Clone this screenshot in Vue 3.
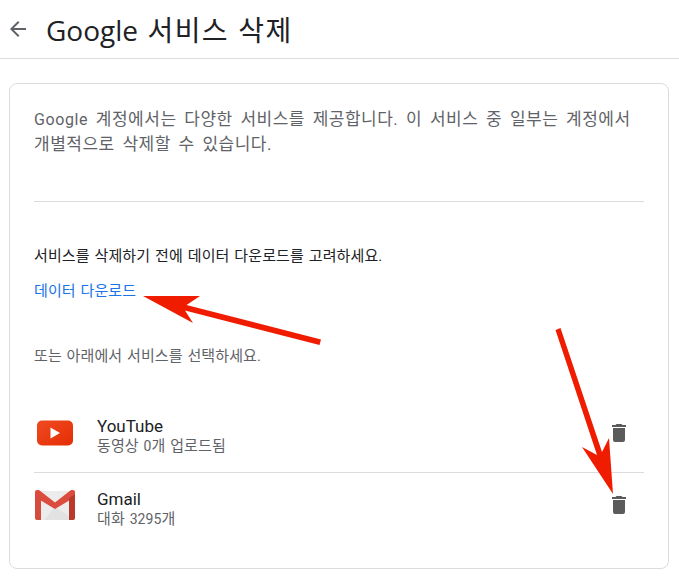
<script setup>
const services = [
  { name: 'YouTube', pre: '동영상 ', num: '0', post: '개 업로드됨', icon: 'yt' },
  { name: 'Gmail', pre: '대화 ', num: '3295', post: '개', icon: 'gm' },
]
</script>

<template>
  <div class="page">
    <header class="head">
      <svg class="back" width="24" height="24" viewBox="0 0 24 24"><path fill="#5f6368" d="M20 11H7.830l5.590-5.590L12 4l-8 8 8 8 1.410-1.410L7.830 13H20v-2z"/></svg>
      <h1 class="title"><span class="title-lat">Google</span> 서비스 삭제</h1>
    </header>
    <main class="card">
      <p class="intro"><span class="lat">Google</span> 계정에서는 다양한 서비스를 제공합니다. 이 서비스 중 일부는 계정에서<br>개별적으로 삭제할 수 있습니다.</p>
      <hr class="rule" />
      <p class="before">서비스를 삭제하기 전에 데이터 다운로드를 고려하세요.</p>
      <a class="link">데이터 다운로드</a>
      <p class="or">또는 아래에서 서비스를 선택하세요.</p>
      <ul class="list">
        <li v-for="s in services" :key="s.name" class="row">
          <svg v-if="s.icon === 'yt'" class="logo" width="42" height="26" viewBox="0 0 42 26">
            <defs><linearGradient id="yg" x1="0" y1="0" x2="1" y2="1"><stop offset="0" stop-color="#ef4a22"/><stop offset="1" stop-color="#e52d04"/></linearGradient></defs>
            <rect x="3" y="0.500" width="36" height="25" rx="5" fill="url(#yg)"/>
            <path d="M16.500 7.500 L26 13 L16.500 18.500 Z" fill="#fff"/>
          </svg>
          <svg v-else class="logo" width="42" height="30" viewBox="0 0 42 30">
            <g transform="translate(1 0)">
              <path d="M0 1h40v27a2 2 0 0 1-2 2H2a2 2 0 0 1-2-2z" fill="#ececec"/>
              <path d="M9 30 L20 17 L40 30z" fill="#e2e2e2"/>
              <path d="M0 2a2 2 0 0 1 2-2h2l16 12.500L36 0h2a2 2 0 0 1 2 2v5L20 19 0 7z" fill="#db4c3f"/>
              <path d="M0 4l6 4v22H2a2 2 0 0 1-2-2z" fill="#d54c3f"/>
              <path d="M40 4l-6 4v22h4a2 2 0 0 0 2-2z" fill="#b93a2d"/>
            </g>
          </svg>
          <div class="info">
            <div class="name">{{ s.name }}</div>
            <div class="detail">{{ s.pre }}<span class="num">{{ s.num }}</span>{{ s.post }}</div>
          </div>
          <svg class="trash" width="24" height="24" viewBox="0 0 24 24"><path fill="#5b5b5b" d="M6 19a2 2 0 0 0 2 2h8a2 2 0 0 0 2-2V7H6v12zM19 4h-3.500l-1-1h-5l-1 1H5v2h14V4z"/></svg>
        </li>
      </ul>
    </main>
    <svg class="arrows" width="679" height="579" viewBox="0 0 679 579">
      <path fill="#f01c00" d="M143 296 L200 296 L186.500 305 L321 339.500 L319.500 345 L185 310.500 L193 323 Z"/>
      <path fill="#f01c00" d="M613 494 L582 447 L597 455 L555.500 330 L560.500 328 L602 452 L609 438 Z"/>
    </svg>
  </div>
</template>

<style>
html, body { margin: 0; background: #fff; }
</style>

<style scoped>
.page { position: relative; width: 679px; height: 579px; overflow: hidden; background: #fff; font-family: Roboto, "Noto Sans CJK KR", sans-serif; }
.head { display: flex; align-items: center; height: 59px; box-sizing: border-box; border-bottom: 1px solid #dadce0; padding-left: 6px; }
.back { flex: none; }
.title { margin: 1px 0 0 16px; font-family: "Open Sans", "Noto Sans CJK KR", sans-serif; font-weight: 400; font-size: 28px; line-height: 58px; color: #202124; letter-spacing: 1.3px; word-spacing: 1px; }
.title-lat { letter-spacing: 0; }
.card { margin: 24px 10px 0 9px; height: 486px; box-sizing: border-box; border: 1px solid #dadce0; border-radius: 8px; padding: 23px 24px 0; }
.intro { margin: 0; font-size: 17px; line-height: 25px; color: #5f6368; letter-spacing: .5px; word-spacing: 3px; }
.lat { font-size: 16px; letter-spacing: .6px; }
.rule { margin: 44px 0 0; border: 0; border-top: 1px solid #dadce0; }
.before { margin: 44px 0 0; font-size: 15px; line-height: 20px; color: #202124; letter-spacing: .12px; word-spacing: 1px; }
.link { display: block; margin-top: 15px; font-size: 15px; line-height: 20px; color: #1a73e8; letter-spacing: .1px; word-spacing: 1px; }
.or { margin: 45px 0 0; font-size: 15px; line-height: 20px; color: #5f6368; letter-spacing: .1px; word-spacing: 1px; }
.list { list-style: none; margin: 34px 0 0; padding: 0; }
.row { display: flex; align-items: center; height: 72px; box-sizing: border-box; }
.row + .row { border-top: 1px solid #dadce0; }
.logo { flex: none; margin-bottom: 7px; }
.info { flex: 1; margin: 0 0 2px 21px; }
.name { font-size: 17px; line-height: 22px; color: #202124; }
.detail { font-size: 15px; line-height: 18px; color: #5f6368; letter-spacing: .1px; word-spacing: 1px; }
.num { font-size: 14px; }
.trash { flex: none; margin: 0 13px 7px 0; }
.arrows { position: absolute; left: 0; top: 0; pointer-events: none; }
</style>
